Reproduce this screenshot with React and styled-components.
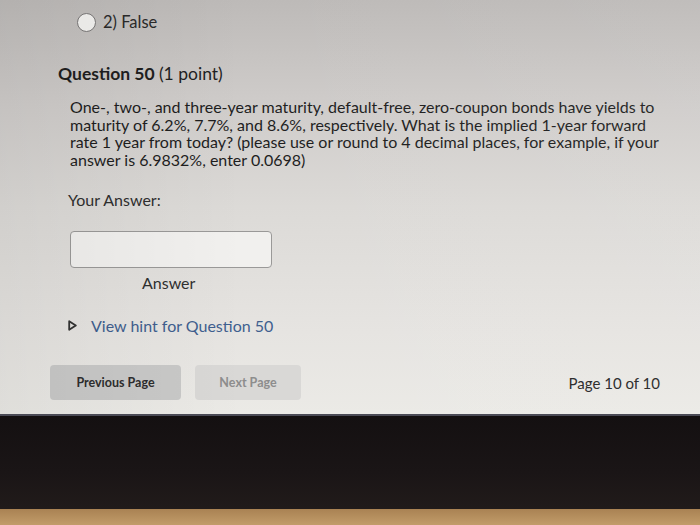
import React from "react";
import styled, { createGlobalStyle } from "styled-components";

const Global = createGlobalStyle`
  html, body { margin: 0; padding: 0; }
  body { width: 700px; height: 525px; overflow: hidden; font-family: Lato, "Open Sans", sans-serif; }
`;

const Frame = styled.div`
  width: 700px;
  height: 525px;
  display: flex;
  flex-direction: column;
  background: #b8915e;
`;

const Screen = styled.div`
  height: 414px;
  flex: none;
  background: linear-gradient(180deg, #bdbab8 0%, #cfccca 25%, #dcdad7 50%, #e6e4e1 80%, #ebeae6 100%);
  position: relative;
  box-sizing: border-box;
  display: flex;
  flex-direction: column;
  color: #2d2d2d;
  &::after {
    content: "";
    position: absolute;
    inset: 0;
    background: linear-gradient(90deg, rgba(0,0,0,0.05) 0%, rgba(0,0,0,0) 35%, rgba(255,255,255,0.05) 100%);
    pointer-events: none;
  }
`;

const Bezel = styled.div`
  height: 93px;
  flex: none;
  background: linear-gradient(180deg, #141011 0%, #1a1516 60%, #211b1a 100%);
  border-top: 2px solid #4a4a55;
`;

const Desk = styled.div`
  flex: 1;
  background: linear-gradient(180deg, #a98253 0%, #c29c6a 100%);
`;

const OptionRow = styled.div`
  display: flex;
  align-items: center;
  gap: 7px;
  margin: 12px 0 0 77px;
  font-size: 16.5px;
  color: #2a2a2a;
`;

const Radio = styled.span`
  width: 17px;
  height: 17px;
  border-radius: 50%;
  border: 1.5px solid #7a7878;
  background: #f2f1ef;
  flex: none;
`;

const QuestionTitle = styled.h2`
  margin: 31px 0 0 58px;
  font-size: 17.5px;
  font-weight: 700;
  color: #1f1f1f;
  span { font-weight: 400; }
`;

const Body = styled.p`
  margin: 14px 0 0 70px;
  width: 600px;
  white-space: nowrap;
  font-size: 16px;
  line-height: 17.5px;
  color: #1e1e1e;
`;

const Label = styled.div`
  margin: 22px 0 0 68px;
  font-size: 16px;
  color: #2f2f2f;
`;

const InputBox = styled.div`
  margin: 22px 0 0 70px;
  width: 200px;
  height: 35px;
  border: 1.5px solid #9a9998;
  border-radius: 4px;
  background: #f1f0ee;
`;

const Caption = styled.div`
  margin: 5px 0 0 142px;
  font-size: 16px;
  color: #303030;
`;

const HintRow = styled.div`
  display: flex;
  align-items: center;
  gap: 14px;
  margin: 24px 0 0 68px;
  font-size: 16px;
  color: #3f5f8f;
`;

const Footer = styled.div`
  display: flex;
  align-items: center;
  margin: 30px 0 0 50px;
  padding-right: 40px;
`;

const PageButton = styled.button`
  height: 35px;
  width: ${(p) => p.$w}px;
  margin-right: ${(p) => p.$mr || 0}px;
  border: none;
  border-radius: 4px;
  font-family: Lato, sans-serif;
  font-size: 12.5px;
  font-weight: 700;
  background: ${(p) => (p.$disabled ? "#d9d8d6" : "#c9c9c8")};
  color: ${(p) => (p.$disabled ? "#8d8d8d" : "#2e2e2e")};
  padding: 0;
`;

const PageInfo = styled.div`
  margin-left: auto;
  font-size: 15px;
  color: #262626;
`;

export default function App() {
  return (
    <Frame>
      <Global />
      <Screen>
        <OptionRow>
          <Radio />
          <span>2) False</span>
        </OptionRow>
        <QuestionTitle>
          Question 50 <span>(1 point)</span>
        </QuestionTitle>
        <Body>
          One-, two-, and three-year maturity, default-free, zero-coupon bonds have yields to
          <br />
          maturity of 6.2%, 7.7%, and 8.6%, respectively. What is the implied 1-year forward
          <br />
          rate 1 year from today? (please use or round to 4 decimal places, for example, if your
          <br />
          answer is 6.9832%, enter 0.0698)
        </Body>
        <Label>Your Answer:</Label>
        <InputBox />
        <Caption>Answer</Caption>
        <HintRow>
          <svg width="9" height="11" viewBox="0 0 9 11">
            <path d="M1.2 1.2 L7.8 5.5 L1.2 9.8 Z" fill="none" stroke="#333" strokeWidth="1.8" strokeLinejoin="round" />
          </svg>
          <span>View hint for Question 50</span>
        </HintRow>
        <Footer>
          <PageButton $w={131} $mr={14}>Previous Page</PageButton>
          <PageButton $w={106} $disabled>Next Page</PageButton>
          <PageInfo>Page 10 of 10</PageInfo>
        </Footer>
      </Screen>
      <Bezel />
      <Desk />
    </Frame>
  );
}
